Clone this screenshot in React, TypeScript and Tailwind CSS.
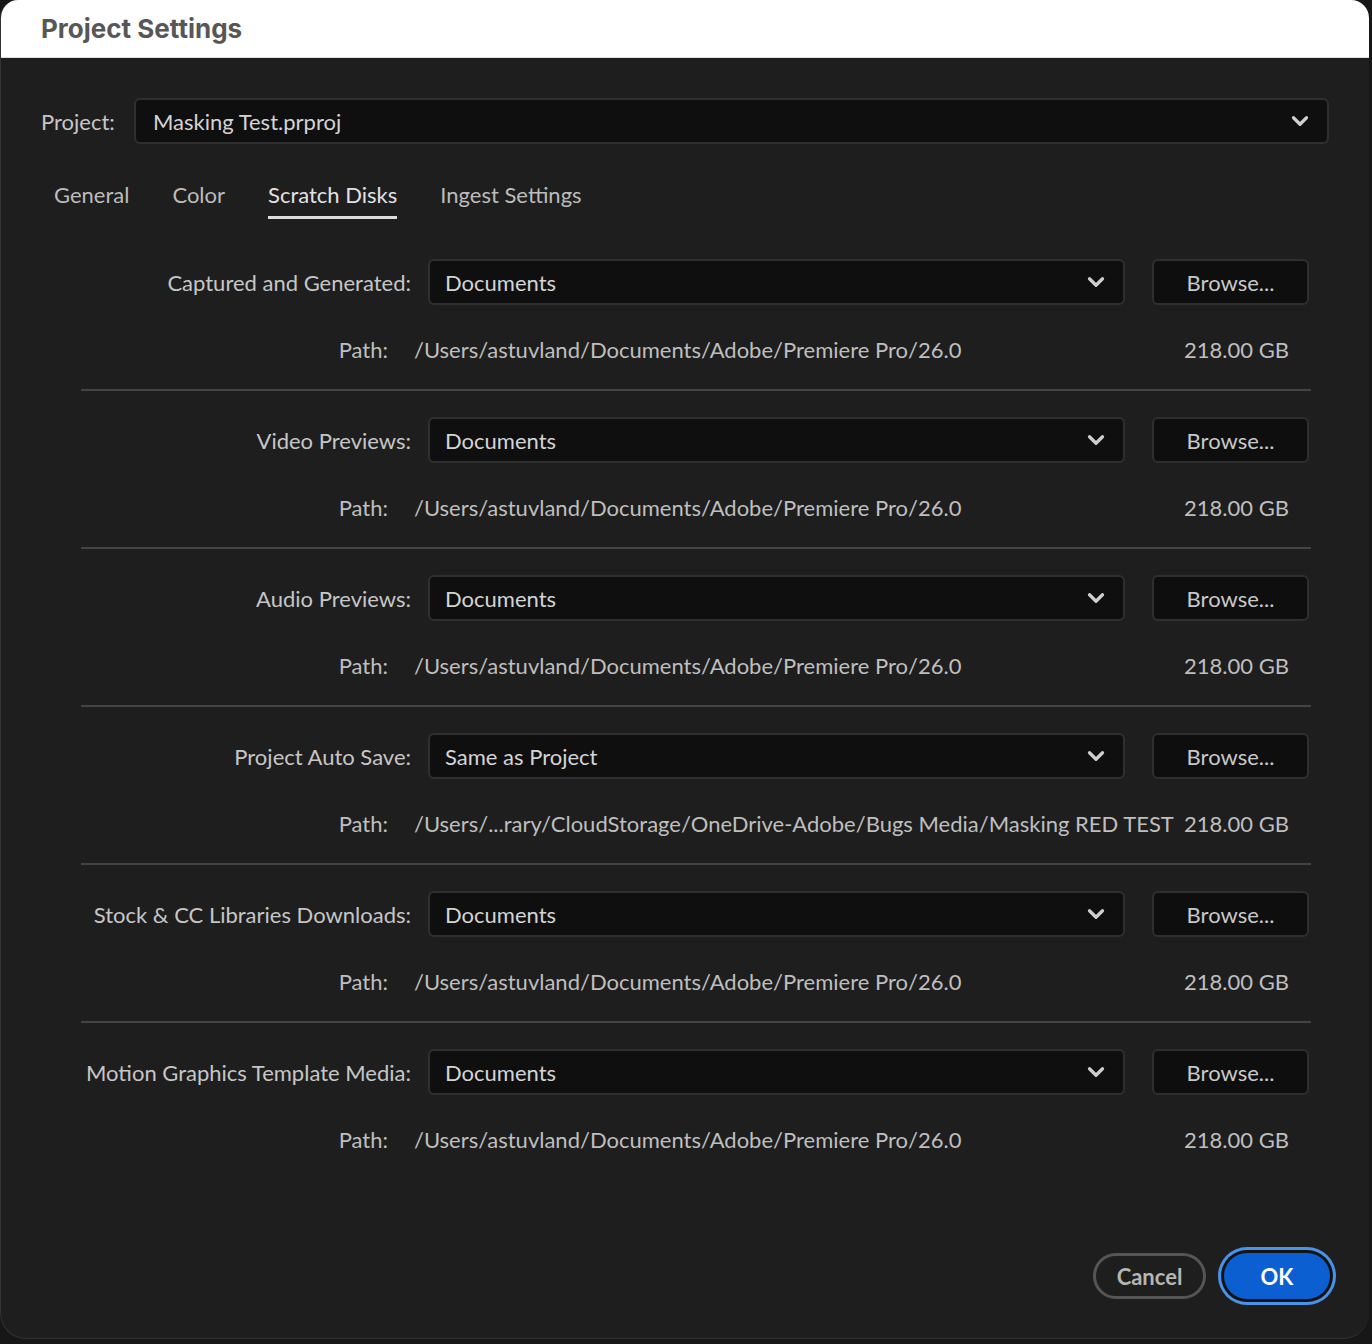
import { ChevronDown } from 'lucide-react';

const rows = [
  { label: 'Captured and Generated:', value: 'Documents', path: '/Users/astuvland/Documents/Adobe/Premiere Pro/26.0' },
  { label: 'Video Previews:', value: 'Documents', path: '/Users/astuvland/Documents/Adobe/Premiere Pro/26.0' },
  { label: 'Audio Previews:', value: 'Documents', path: '/Users/astuvland/Documents/Adobe/Premiere Pro/26.0' },
  { label: 'Project Auto Save:', value: 'Same as Project', path: '/Users/...rary/CloudStorage/OneDrive-Adobe/Bugs Media/Masking RED TEST' },
  { label: 'Stock & CC Libraries Downloads:', value: 'Documents', path: '/Users/astuvland/Documents/Adobe/Premiere Pro/26.0' },
  { label: 'Motion Graphics Template Media:', value: 'Documents', path: '/Users/astuvland/Documents/Adobe/Premiere Pro/26.0' },
];

const tabs = ['General', 'Color', 'Scratch Disks', 'Ingest Settings'];

function Dropdown({ value, className }: { value: string; className?: string }) {
  return (
    <div
      className={`flex h-[46px] items-center justify-between rounded-[6px] border-2 border-[#2f2f2f] bg-[#0f0f0f] pl-[15px] pr-[14px] text-[22px] text-[#d4d4d4] ${className ?? ''}`}
    >
      <span>{value}</span>
      <ChevronDown className="h-[26px] w-[26px] text-[#cfcfcf]" strokeWidth={3} />
    </div>
  );
}

export default function App() {
  return (
    <div className="h-[1344px] w-[1372px] overflow-hidden bg-[#171717]" style={{ fontFamily: 'Lato, "Noto Sans", sans-serif' }}>
      <div className="flex h-[1339px] w-[1369px] flex-col overflow-hidden rounded-t-[18px] rounded-b-[26px] border-l border-b border-[#333] bg-[#1e1e1e]">
        {/* title bar */}
        <div className="flex h-[58px] shrink-0 items-center border-b border-[#dcdcdc] bg-white pl-[40px]">
          <h1 className="text-[26px] font-bold text-[#575757]" style={{ fontFamily: 'Inter, sans-serif' }}>
            Project Settings
          </h1>
        </div>

        <div className="flex flex-1 flex-col">
          {/* project picker */}
          <div className="mt-[40px] flex items-center pl-[40px] pr-[40px]">
            <span className="w-[93px] text-[22px] text-[#c6c6c6]">Project:</span>
            <Dropdown value="Masking Test.prproj" className="flex-1 pl-[17px]" />
          </div>

          {/* tabs */}
          <div className="mt-[30px] flex gap-[43px] pl-[53px]">
            {tabs.map((t) => (
              <div
                key={t}
                className={`h-[45px] text-[22px] leading-[42px] ${
                  t === 'Scratch Disks' ? 'border-b-[3px] border-[#dcdcdc] text-[#e2e2e2]' : 'text-[#bcbcbc]'
                }`}
              >
                {t}
              </div>
            ))}
          </div>

          {/* scratch disk rows */}
          <div className="ml-[80px] mt-[40px] w-[1230px]">
            {rows.map((r, i) => (
              <div key={r.label} className={i > 0 ? 'pt-[26px]' : ''}>
                <div className="flex h-[46px] items-center">
                  <span className="w-[330px] text-right text-[22px] text-[#c6c6c6]">{r.label}</span>
                  <Dropdown value={r.value} className="ml-[17px] w-[697px]" />
                  <button className="ml-[27px] h-[46px] w-[157px] rounded-[6px] border-2 border-[#2f2f2f] bg-[#0e0e0e] text-[22px] text-[#c8c8c8]">
                    Browse...
                  </button>
                </div>
                <div className="mt-[29px] flex h-[30px] items-center text-[22px] text-[#bfbfbf]">
                  <span className="w-[307px] text-right">Path:</span>
                  <span className="ml-[26px] flex-1 whitespace-nowrap">{r.path}</span>
                  <span className="mr-[22px] whitespace-nowrap">218.00 GB</span>
                </div>
                {i < rows.length - 1 && <div className="mt-[25px] h-[2px] bg-[#444]" />}
              </div>
            ))}
          </div>

          {/* footer */}
          <div className="mt-auto mb-[39px] flex justify-end gap-[18px] pr-[39px]">
            <button className="h-[46px] w-[113px] rounded-full border-[3px] border-[#555] text-[22px] font-bold text-[#b5b5b5]">
              Cancel
            </button>
            <button className="h-[46px] w-[106px] rounded-full bg-[#0b5fd0] text-[22px] font-bold text-white ring-[3px] ring-[#4a93ea] ring-offset-[3px] ring-offset-[#141414]">
              OK
            </button>
          </div>
        </div>
      </div>
    </div>
  );
}
